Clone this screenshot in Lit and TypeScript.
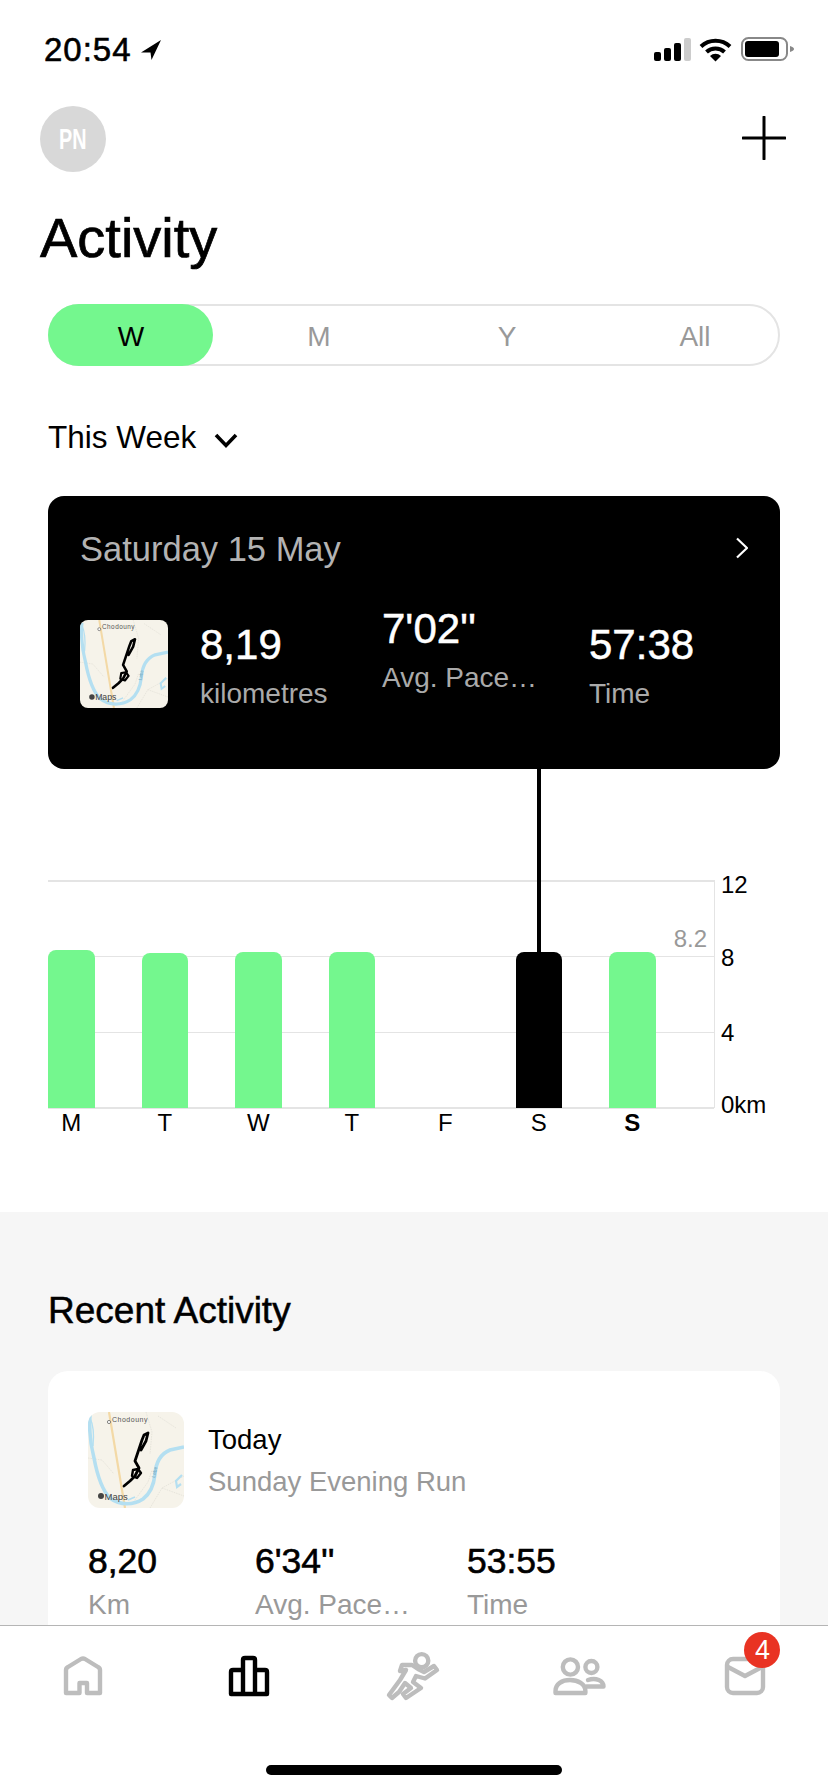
import { html, css, LitElement } from "lit"
import { customElement } from "lit/decorators.js"

const KM_PX = 19

const WEEK = [
  { day: "M", km: 8.32 },
  { day: "T", km: 8.16 },
  { day: "W", km: 8.21 },
  { day: "T", km: 8.21 },
  { day: "F", km: 0 },
  { day: "S", km: 8.2, selected: true },
  { day: "S", km: 8.2, today: true },
]

const TICKS = [
  { label: "12", h: 73 },
  { label: "8", h: 75 },
  { label: "4", h: 72 },
  { label: "0km", h: 28 },
]

const routeMap = () => html`
  <svg class="map" viewBox="0 0 96 96">
    <rect width="96" height="96" fill="#f6f3ea" />
    <g fill="none" stroke="#dcdad2" stroke-width=".6" stroke-dasharray="1.5 1">
      <path d="M58 0 L64 20 L62 42 M70 4 L88 16 M62 96 L74 76 L96 64 M74 76 L96 84 M0 46 L14 48 L26 62 M44 92 L60 70 L64 58" />
    </g>
    <path d="M21 0 L37 96" fill="none" stroke="#f3d9a6" stroke-width="2.2" />
    <path d="M2 3 C1 16 3 34 6 46 C9 62 14 78 22 86 C32 94 46 93 55 87 C63 81 66 72 67 62 C68 50 72 42 82 38 L96 35" fill="none" stroke="#b4dff1" stroke-width="3.6" />
    <path d="M2 6 C6 14 6 24 5 34" fill="none" stroke="#b4dff1" stroke-width="1.4" />
    <path d="M40 88 L47 85" fill="none" stroke="#b4dff1" stroke-width="1.6" />
    <path d="M94 63 L88 69 L89 75 L93 72" fill="none" stroke="#b4dff1" stroke-width="2.2" />
    <circle cx="21" cy="10" r="1.6" fill="#fff" stroke="#555" stroke-width=".7" />
    <text x="24" y="10" class="map-town">Chodouny</text>
    <text class="map-river" transform="translate(67 66) rotate(-78)">Labe</text>
    <path d="M36 74 L42 69 L47 64 L51 56 L47 49 L50 40 L54 28 L56 23 L60 21 L58 29 L53 38" fill="none" stroke="#000" stroke-width="2.8" stroke-linejoin="round" stroke-linecap="round" />
    <path d="M45 58 L50 57 L53 61 L49 66 L44 64 Z" fill="none" stroke="#000" stroke-width="2.4" stroke-linejoin="round" />
    <circle cx="13" cy="84" r="3" fill="#444" />
    <text x="16.5" y="87.5" class="map-brand">Maps</text>
  </svg>
`

@customElement("app-root")
export class AppRoot extends LitElement {
  static styles = css`
    :host {
      display: flex;
      flex-direction: column;
      width: 828px;
      height: 1792px;
      overflow: hidden;
      background: #fff;
      color: #000;
      font-family: "Liberation Sans", Arial, sans-serif;
    }
    .scroller {
      flex: 1;
      min-height: 0;
      overflow: hidden;
    }
    .medium {
      -webkit-text-stroke: 0.5px currentColor;
    }

    .status {
      display: flex;
      justify-content: space-between;
      height: 80px;
      padding: 37px 34px 0 44px;
      box-sizing: border-box;
    }
    .clock {
      display: flex;
      align-items: flex-start;
      gap: 9px;
      font-size: 33px;
      line-height: 26px;
      letter-spacing: 1px;
      -webkit-text-stroke: 0.6px #000;
    }
    .clock svg {
      margin-top: 3px;
    }
    .indicators {
      display: flex;
      gap: 8px;
      height: 25px;
      align-items: flex-start;
    }
    .top {
      display: flex;
      justify-content: space-between;
      padding: 26px 42px 0 40px;
    }
    .avatar {
      display: flex;
      align-items: center;
      justify-content: center;
      width: 66px;
      height: 66px;
      border-radius: 50%;
      background: #d8d8d8;
      color: #fff;
      font-size: 30px;
      font-weight: 700;
    }
    .avatar span {
      display: inline-block;
      transform: scaleX(0.66);
    }
    .plus {
      margin-top: 10px;
    }
    h1 {
      margin: 34px 0 0 40px;
      font-size: 56px;
      line-height: 64px;
      font-weight: 400;
      -webkit-text-stroke: 0.7px #000;
    }

    .segment {
      position: relative;
      height: 62px;
      margin: 34px 48px 0;
      box-sizing: border-box;
      border: 2px solid #e4e4e4;
      border-radius: 31px;
    }
    .pill {
      position: absolute;
      top: -2px;
      left: -2px;
      width: 165px;
      height: 62px;
      border-radius: 31px;
      background: #74f78e;
    }
    .segment-labels {
      position: relative;
      display: grid;
      grid-template-columns: repeat(4, 188px);
      margin: 0 -11px 0 -13px;
      font-size: 28px;
      line-height: 62px;
      height: 58px;
      text-align: center;
      color: #999;
    }
    .segment-labels .on {
      color: #000;
    }

    .range {
      display: flex;
      gap: 18px;
      margin: 51px 48px 0;
      font-size: 31.5px;
      line-height: 40px;
    }
    .range svg {
      margin-top: 15px;
    }

    .day-card {
      display: flex;
      flex-direction: column;
      height: 273px;
      margin: 39px 48px 0;
      padding: 33px 32px 0;
      box-sizing: border-box;
      border-radius: 16px;
      background: #000;
      color: #fff;
    }
    .day-head {
      display: flex;
      justify-content: space-between;
      align-items: center;
      font-size: 34.5px;
      line-height: 40px;
      color: #b3b3b3;
    }
    .day-head svg {
      margin: -2px 0 0;
    }
    .day-stats {
      display: grid;
      grid-template-columns: 120px 182px 207px 1fr;
      margin-top: 51px;
    }
    .day-card .map {
      width: 88px;
      height: 88px;
    }
    .day-stat {
      padding-top: 1px;
    }
    .day-stat.raised {
      margin-top: -16px;
    }
    .day-stat b {
      display: block;
      font-size: 42px;
      line-height: 48px;
      font-weight: 400;
      -webkit-text-stroke: 0.5px #fff;
    }
    .day-stat span {
      display: block;
      margin-top: 8px;
      font-size: 28px;
      line-height: 34px;
      color: #aaa;
      white-space: nowrap;
    }

    .chart {
      position: relative;
      display: flex;
      margin: 0 0 75px 48px;
      padding-top: 111px;
    }
    .stem {
      position: absolute;
      top: 0;
      left: 489px;
      width: 4px;
      height: 183px;
      background: #000;
    }
    .plot-wrap {
      width: 667px;
    }
    .plot {
      position: relative;
      height: 228px;
      border-right: 1.5px solid #e4e4e4;
    }
    .lines {
      position: absolute;
      inset: 0 0 -1px 0;
      display: flex;
      flex-direction: column;
      justify-content: space-between;
    }
    .lines i {
      display: block;
      height: 1.5px;
      background: #e4e4e4;
    }
    .bars,
    .days {
      display: grid;
      grid-template-columns: repeat(7, 93.5px);
    }
    .bars {
      position: relative;
      height: 100%;
      align-items: end;
    }
    .bar {
      width: 46.5px;
      border-radius: 8px 8px 0 0;
      background: #74f78e;
    }
    .bar.selected {
      background: #000;
    }
    .average {
      position: absolute;
      top: 45px;
      right: 7px;
      font-size: 24px;
      line-height: 28px;
      color: #999;
    }
    .days {
      margin-top: 1px;
      font-size: 24px;
      line-height: 28px;
    }
    .days span {
      width: 46.5px;
      text-align: center;
    }
    .days .today {
      font-weight: 700;
    }
    .axis {
      margin: -9px 0 0 6px;
      font-size: 24px;
      line-height: 28px;
    }

    .recent {
      padding: 77px 48px 0;
      background: #f6f6f6;
    }
    h2 {
      margin: 0;
      font-size: 37px;
      line-height: 44px;
      font-weight: 400;
      -webkit-text-stroke: 0.5px #000;
    }
    .run {
      margin-top: 38px;
      height: 300px;
      padding: 41px 40px 0;
      box-sizing: border-box;
      border-radius: 20px;
      background: #fff;
    }
    .run-head {
      display: flex;
      gap: 24px;
    }
    .run .map {
      width: 96px;
      height: 96px;
      border-radius: 12px;
    }
    .run-title {
      margin-top: 12px;
      font-size: 27.5px;
      line-height: 32px;
    }
    .run-title div + div {
      margin-top: 10px;
      color: #999;
    }
    .run-stats {
      display: grid;
      grid-template-columns: 167px 212px 1fr;
      margin-top: 32px;
    }
    .run-stats b {
      display: block;
      font-size: 35.5px;
      line-height: 42px;
      font-weight: 400;
      -webkit-text-stroke: 0.6px #000;
    }
    .run-stats span {
      display: block;
      margin-top: 6px;
      font-size: 28px;
      line-height: 34px;
      color: #999;
    }

    .map {
      display: block;
      border-radius: 8px;
    }
    .map-town {
      font-size: 7px;
      letter-spacing: 0.5px;
      fill: #555;
    }
    .map-river {
      font-size: 5px;
      fill: #6a9db5;
    }
    .map-brand {
      font-size: 9.5px;
      fill: #444;
    }

    .tabs {
      flex: none;
      display: flex;
      flex-direction: column;
      align-items: center;
      height: 167px;
      box-sizing: border-box;
      border-top: 1px solid #b5b5b5;
      background: #fff;
    }
    .tab-row {
      display: grid;
      grid-template-columns: repeat(5, 1fr);
      width: 100%;
      padding-top: 19px;
    }
    .tab {
      position: relative;
      display: flex;
      justify-content: center;
    }
    .tab svg {
      fill: none;
      stroke: #bdbdbd;
      stroke-width: 4.4;
      stroke-linejoin: round;
      stroke-linecap: round;
    }
    .tab.active svg {
      stroke: #000;
    }
    .badge {
      position: absolute;
      top: -13px;
      left: 82px;
      width: 36px;
      height: 36px;
      border-radius: 50%;
      background: #e93323;
      color: #fff;
      font-size: 27px;
      line-height: 36px;
      text-align: center;
    }
    .home-bar {
      width: 296px;
      height: 10px;
      margin-top: 60px;
      border-radius: 5px;
      background: #000;
    }
  `

  private statusIcons() {
    return html`
      <div class="indicators">
        <svg width="37" height="24" viewBox="0 0 37 24">
          <rect x="0" y="15" width="7" height="9" rx="2" fill="#000" />
          <rect x="10" y="11" width="7" height="13" rx="2" fill="#000" />
          <rect x="20" y="6" width="7" height="18" rx="2" fill="#000" />
          <rect x="30" y="1" width="7" height="23" rx="2" fill="#ccc" />
        </svg>
        <svg width="33" height="25" viewBox="0 0 33 25">
          <path d="M2 9.5 A21 21 0 0 1 31 9.5" fill="none" stroke="#000" stroke-width="4" />
          <path d="M7.5 15 A13 13 0 0 1 25.5 15" fill="none" stroke="#000" stroke-width="4" />
          <path d="M16.5 24.5 L11 19 A8 8 0 0 1 22 19 Z" fill="#000" />
        </svg>
        <svg width="53" height="24" viewBox="0 0 53 24" style="margin-left:1px">
          <rect x="1" y="1" width="45" height="22" rx="6.5" fill="none" stroke="#888" stroke-width="2" />
          <rect x="4" y="4" width="34" height="16" rx="3" fill="#000" />
          <path d="M49 9 C52 10 53 11 53 12 C53 13 52 14 49 15 Z" fill="#888" />
        </svg>
      </div>
    `
  }

  private dayCard() {
    return html`
      <section class="day-card">
        <div class="day-head">
          <span>Saturday 15 May</span>
          <svg width="12" height="22" viewBox="0 0 12 22">
            <path d="M1 1.5 L11 11 L1 20.5" fill="none" stroke="#fff" stroke-width="2.2" />
          </svg>
        </div>
        <div class="day-stats">
          ${routeMap()}
          <div class="day-stat"><b>8,19</b><span>kilometres</span></div>
          <div class="day-stat raised"><b>7'02''</b><span>Avg. Pace…</span></div>
          <div class="day-stat"><b>57:38</b><span>Time</span></div>
        </div>
      </section>
    `
  }

  private chart() {
    return html`
      <section class="chart">
        <div class="plot-wrap">
          <div class="plot">
            <div class="lines"><i></i><i></i><i></i><i></i></div>
            <div class="bars">
              ${WEEK.map((d) =>
                d.km
                  ? html`<div
                      class="bar ${d.selected ? "selected" : ""}"
                      style="height:${Math.round(d.km * KM_PX)}px"
                    ></div>`
                  : html`<div></div>`
              )}
            </div>
            <div class="average">8.2</div>
          </div>
          <div class="days">
            ${WEEK.map((d) => html`<span class="${d.today ? "today" : ""}">${d.day}</span>`)}
          </div>
        </div>
        <div class="axis">
          ${TICKS.map((t) => html`<div style="height:${t.h}px">${t.label}</div>`)}
        </div>
        <div class="stem"></div>
      </section>
    `
  }

  private recent() {
    return html`
      <section class="recent">
        <h2>Recent Activity</h2>
        <article class="run">
          <div class="run-head">
            ${routeMap()}
            <div class="run-title">
              <div>Today</div>
              <div>Sunday Evening Run</div>
            </div>
          </div>
          <div class="run-stats">
            <div><b>8,20</b><span>Km</span></div>
            <div><b>6'34''</b><span>Avg. Pace…</span></div>
            <div><b>53:55</b><span>Time</span></div>
          </div>
        </article>
      </section>
    `
  }

  private tabs() {
    return html`
      <nav class="tabs">
        <div class="tab-row">
          <div class="tab">
            <svg width="64" height="60" viewBox="0 0 64 60">
              <path d="M15 48 V25 Q15 23 17 22 L30 14 Q32 13 34 14 L47 22 Q49 23 49 25 V48 H36 V38 H28.5 V48 Z" />
            </svg>
          </div>
          <div class="tab active">
            <svg width="64" height="60" viewBox="0 0 64 60">
              <path d="M15 49 V27 Q15 25 17 25 H27 V15 Q27 13 29 13 H37 Q39 13 39 15 V25 H49 Q51 25 51 27 V49 Z M27 25 V49 M39 25 V49" />
            </svg>
          </div>
          <div class="tab">
            <svg width="64" height="60" viewBox="0 0 64 60">
              <g transform="translate(-2 0)">
                <circle cx="41.7" cy="15.7" r="6.6" />
                <path d="M22 20 H32 L38 24 L44 27 L54 21 L57 25 L45 33.5 L36 31 L33 37 L41 43 L26 53 L23 49 L31 43 L25 38 L19 47 L12 53 L9 50 L20 35 L26 25 L20 26 Z" />
              </g>
            </svg>
          </div>
          <div class="tab">
            <svg width="64" height="60" viewBox="0 0 64 60">
              <circle cx="22.4" cy="22" r="7.6" />
              <path d="M7.5 48 V46 C7.5 39 14 35 22 35 C30 35 37.4 39 37.4 46 V48 Z" />
              <circle cx="43.4" cy="22" r="6" />
              <path d="M40 35 C48 32 55.5 36 55.5 41.5 H38.5" />
            </svg>
          </div>
          <div class="tab">
            <svg width="64" height="60" viewBox="0 0 64 60">
              <rect x="14" y="14" width="36" height="34" rx="6" />
              <path d="M15 22 L32 31 L49 22" />
            </svg>
            <div class="badge">4</div>
          </div>
        </div>
        <div class="home-bar"></div>
      </nav>
    `
  }

  render() {
    return html`
      <div class="scroller">
        <header class="status">
          <div class="clock">
            <span>20:54</span>
            <svg width="20" height="20" viewBox="0 0 20 20">
              <path d="M20 0 L0 12.5 L9.5 12.5 L10.5 20 Z" fill="#000" />
            </svg>
          </div>
          ${this.statusIcons()}
        </header>
        <div class="top">
          <div class="avatar"><span>PN</span></div>
          <svg class="plus" width="44" height="44" viewBox="0 0 44 44">
            <path d="M22 1 V43 M1 22 H43" fill="none" stroke="#000" stroke-width="3" stroke-linecap="round" />
          </svg>
        </div>
        <h1>Activity</h1>
        <div class="segment">
          <div class="pill"></div>
          <div class="segment-labels">
            <span class="on">W</span><span>M</span><span>Y</span><span>All</span>
          </div>
        </div>
        <div class="range">
          <span>This Week</span>
          <svg width="24" height="17" viewBox="0 0 24 17">
            <path d="M2 3 L12 13.5 L22 3" fill="none" stroke="#000" stroke-width="3.6" />
          </svg>
        </div>
        ${this.dayCard()} ${this.chart()} ${this.recent()}
      </div>
      ${this.tabs()}
    `
  }
}

declare global {
  interface HTMLElementTagNameMap {
    "app-root": AppRoot
  }
}
